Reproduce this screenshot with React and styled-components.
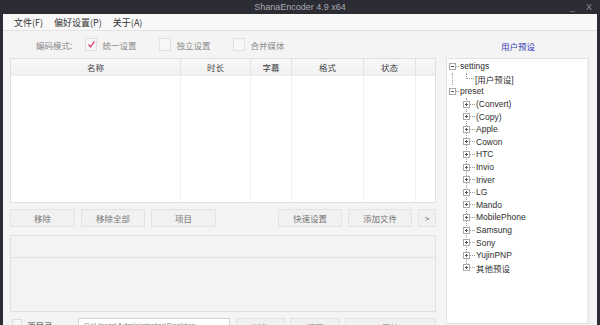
import React from 'react';
import styled, { createGlobalStyle } from 'styled-components';

const GlobalStyle = createGlobalStyle`
  html, body { margin: 0; padding: 0; background: #2c2c35; }
  body { font-family: "Liberation Sans", "Noto Sans CJK SC", sans-serif; }
  * { box-sizing: border-box; }
`;

const Window = styled.div`
  width: 600px;
  height: 325px;
  background: #2c2c35;
  display: flex;
  flex-direction: column;
  overflow: hidden;
`;

const TitleBar = styled.div`
  height: 14px;
  flex: none;
  display: grid;
  grid-template-columns: 1fr auto 1fr;
  align-items: center;
  color: #a9a9b2;
  font-size: 9px;
`;

const TitleText = styled.div`
  grid-column: 2;
`;

const WinControls = styled.div`
  justify-self: end;
  display: flex;
  gap: 11px;
  padding-right: 8px;
  color: #8c8c96;
  font-size: 9px;
`;

const Frame = styled.div`
  flex: 1;
  margin: 0 3px;
  background: #f4f4f4;
  display: flex;
  flex-direction: column;
  min-height: 0;
`;

const MenuBar = styled.div`
  height: 17px;
  flex: none;
  display: flex;
  align-items: center;
  gap: 11px;
  padding-left: 11px;
  background: #f8f8f8;
  border-bottom: 1px solid #e3e3e3;
  font-family: "Noto Sans CJK SC", sans-serif;
  font-size: 9px;
  color: #333;
`;

const Content = styled.div`
  display: grid;
  grid-template-columns: 426px 144px;
  column-gap: 10px;
  padding: 0 7px;
  flex: 1;
  min-height: 0;
`;

const LeftCol = styled.div`
  display: flex;
  flex-direction: column;
`;

const RightCol = styled.div`
  display: flex;
  flex-direction: column;
`;

const ModeRow = styled.div`
  height: 27px;
  display: flex;
  align-items: center;
  padding-left: 26px;
  font-family: "Noto Sans CJK SC", sans-serif;
  font-size: 8.5px;
  color: #8a8a8a;
`;

const ModeLabel = styled.span`
  margin-right: 13px;
`;

const CheckItem = styled.label`
  display: flex;
  align-items: center;
  gap: 5px;
  margin-right: 23px;
`;

const CheckBox = styled.span`
  width: 12px;
  height: 13px;
  border: 1px solid #e1e1e1;
  background: #f7f7f7;
  display: flex;
  align-items: center;
  justify-content: center;
`;

const Table = styled.div`
  height: 145px;
  border: 1px solid #dfdfdf;
  background: #fff;
  display: flex;
  flex-direction: column;
`;

const cols = '170px 70px 41px 72px 52px 1fr';

const HeadRow = styled.div`
  height: 17px;
  display: grid;
  grid-template-columns: ${cols};
  background: linear-gradient(#f8f8f8, #f0f0f0);
  border-bottom: 1px solid #ececec;
`;

const HeadCell = styled.div`
  display: flex;
  align-items: center;
  justify-content: center;
  border-right: 1px solid #e4e4e4;
  font-family: "Noto Sans CJK SC", sans-serif;
  font-size: 8.5px;
  color: #444;
  &:last-child { border-right: none; }
`;

const BodyRow = styled.div`
  flex: 1;
  display: grid;
  grid-template-columns: ${cols};
`;

const BodyCell = styled.div`
  border-right: 1px solid #f1f1f1;
  &:last-child { border-right: none; }
`;

const ButtonRow = styled.div`
  margin-top: 6px;
  height: 18px;
  display: flex;
  gap: 6px;
`;

const Btn = styled.div`
  width: ${p => p.$w || 65}px;
  height: 100%;
  background: #f1f1f1;
  border: 1px solid #e2e2e2;
  display: flex;
  align-items: center;
  justify-content: center;
  font-family: "Noto Sans CJK SC", sans-serif;
  font-size: 8.5px;
  color: #777;
  flex: ${p => (p.$grow ? 1 : 'none')};
`;

const Spacer = styled.div`
  flex: 1;
`;

const LowerPanel = styled.div`
  margin-top: 8px;
  height: 77px;
  border: 1px solid #e0e0e0;
  background: #f3f3f3;
  display: flex;
  flex-direction: column;
`;

const LowerHead = styled.div`
  height: 22px;
  border-bottom: 1px solid #e2e2e2;
`;

const BottomRow = styled.div`
  margin-top: 6px;
  height: 18px;
  display: flex;
  align-items: flex-start;
  padding-left: 2px;
  font-family: "Noto Sans CJK SC", sans-serif;
  font-size: 8.5px;
`;

const SmallBox = styled.span`
  width: 10px;
  height: 12px;
  border: 1px solid #dedede;
  background: #f7f7f7;
  margin-right: 5px;
  margin-top: 1px;
`;

const DirLabel = styled.span`
  width: 51px;
  color: #444;
  line-height: 14px;
`;

const PathInput = styled.div`
  width: 152px;
  height: 18px;
  border: 1px solid #d2d2d2;
  background: #fff;
  color: #888;
  padding: 2px 5px;
  font-family: "Liberation Sans", sans-serif;
  font-size: 8px;
  margin-right: 6px;
`;

const BottomBtns = styled.div`
  flex: 1;
  display: flex;
  gap: 5px;
  height: 18px;
`;

const PresetTitle = styled.div`
  height: 27px;
  display: flex;
  align-items: center;
  justify-content: center;
  padding-top: 3px;
  font-family: "Noto Sans CJK SC", sans-serif;
  font-size: 8.5px;
  color: #3838b8;
`;

const TreePanel = styled.div`
  height: 266px;
  border: 1px solid #e2e2e2;
  border-right: 3px solid #ececec;
  background: #fff;
  padding-top: 1px;
`;

const Group = styled.div`
  position: relative;
  &::before {
    content: '';
    position: absolute;
    left: ${p => p.$line}px;
    top: 0;
    bottom: ${p => p.$bottom}px;
    border-left: 1px dotted #9a9a9a;
  }
`;

const Row = styled.div`
  position: relative;
  height: 12.6px;
  display: flex;
  align-items: center;
  padding-left: ${p => (p.$level ? 16 : 2)}px;
  font-family: "Liberation Sans", "Noto Sans CJK SC", sans-serif;
  font-size: 8.5px;
  color: #2e2e2e;
  white-space: nowrap;
`;

const Toggle = styled.span`
  position: relative;
  z-index: 1;
  width: 7px;
  height: 7px;
  border: 1px solid #a8a8a8;
  background: #fff;
  flex: none;
  &::before {
    content: '';
    position: absolute;
    left: 1px;
    top: 2px;
    width: 3px;
    height: 1px;
    background: #555;
  }
  &::after {
    content: '';
    display: ${p => (p.$open ? 'none' : 'block')};
    position: absolute;
    left: 2px;
    top: 1px;
    width: 1px;
    height: 3px;
    background: #555;
  }
`;

const Dash = styled.span`
  width: ${p => p.$w || 3}px;
  border-top: 1px dotted #9a9a9a;
  margin-right: 1px;
  flex: none;
`;

const Elbow = styled.span`
  align-self: flex-start;
  margin-left: 3px;
  width: 8px;
  height: 6.5px;
  border-left: 1px dotted #9a9a9a;
  border-bottom: 1px dotted #9a9a9a;
  margin-right: 1px;
  flex: none;
`;

const Check = () => (
  <svg width="9" height="9" viewBox="0 0 9 9">
    <polyline points="1.5,4.5 3.5,7 7.5,1.5" fill="none" stroke="#e2477e" strokeWidth="1.3" />
  </svg>
);

const presets = ['(Convert)', '(Copy)', 'Apple', 'Cowon', 'HTC', 'Invio', 'Iriver', 'LG', 'Mando', 'MobilePhone', 'Samsung', 'Sony', 'YujinPNP', '其他预设'];

const headers = ['名称', '时长', '字幕', '格式', '状态', ''];

const App = () => (
  <>
    <GlobalStyle />
    <Window>
      <TitleBar>
        <TitleText>ShanaEncoder 4.9 x64</TitleText>
        <WinControls><span>_</span><span>X</span></WinControls>
      </TitleBar>
      <Frame>
        <MenuBar>
          <span>文件(F)</span>
          <span>偏好设置(P)</span>
          <span>关于(A)</span>
        </MenuBar>
        <Content>
          <LeftCol>
            <ModeRow>
              <ModeLabel>编码模式:</ModeLabel>
              <CheckItem><CheckBox><Check /></CheckBox>统一设置</CheckItem>
              <CheckItem><CheckBox />独立设置</CheckItem>
              <CheckItem><CheckBox />合并媒体</CheckItem>
            </ModeRow>
            <Table>
              <HeadRow>
                {headers.map((h, i) => <HeadCell key={i}>{h}</HeadCell>)}
              </HeadRow>
              <BodyRow>
                {headers.map((h, i) => <BodyCell key={i} />)}
              </BodyRow>
            </Table>
            <ButtonRow>
              <Btn>移除</Btn>
              <Btn $w={64}>移除全部</Btn>
              <Btn>项目</Btn>
              <Spacer />
              <Btn $w={64}>快速设置</Btn>
              <Btn $w={64}>添加文件</Btn>
              <Btn $w={18}>&gt;</Btn>
            </ButtonRow>
            <LowerPanel>
              <LowerHead />
            </LowerPanel>
            <BottomRow>
              <SmallBox />
              <DirLabel>源目录</DirLabel>
              <PathInput>C:\Users\Administrator\Desktop</PathInput>
              <BottomBtns>
                <Btn $w={49}>浏览</Btn>
                <Btn $w={50}>打开</Btn>
                <Btn $grow>开始</Btn>
              </BottomBtns>
            </BottomRow>
          </LeftCol>
          <RightCol>
            <PresetTitle>用户预设</PresetTitle>
            <TreePanel>
              <Row><Toggle $open /><Dash />settings</Row>
              <Group $line={5} $bottom={0}>
                <Row $level={1}><Elbow />[用户预设]</Row>
              </Group>
              <Row><Toggle $open /><Dash />preset</Row>
              <Group $line={19} $bottom={6}>
                {presets.map(p => (
                  <Row key={p} $level={1}><Toggle /><Dash $w={5} />{p}</Row>
                ))}
              </Group>
            </TreePanel>
          </RightCol>
        </Content>
      </Frame>
    </Window>
  </>
);

export default App;
